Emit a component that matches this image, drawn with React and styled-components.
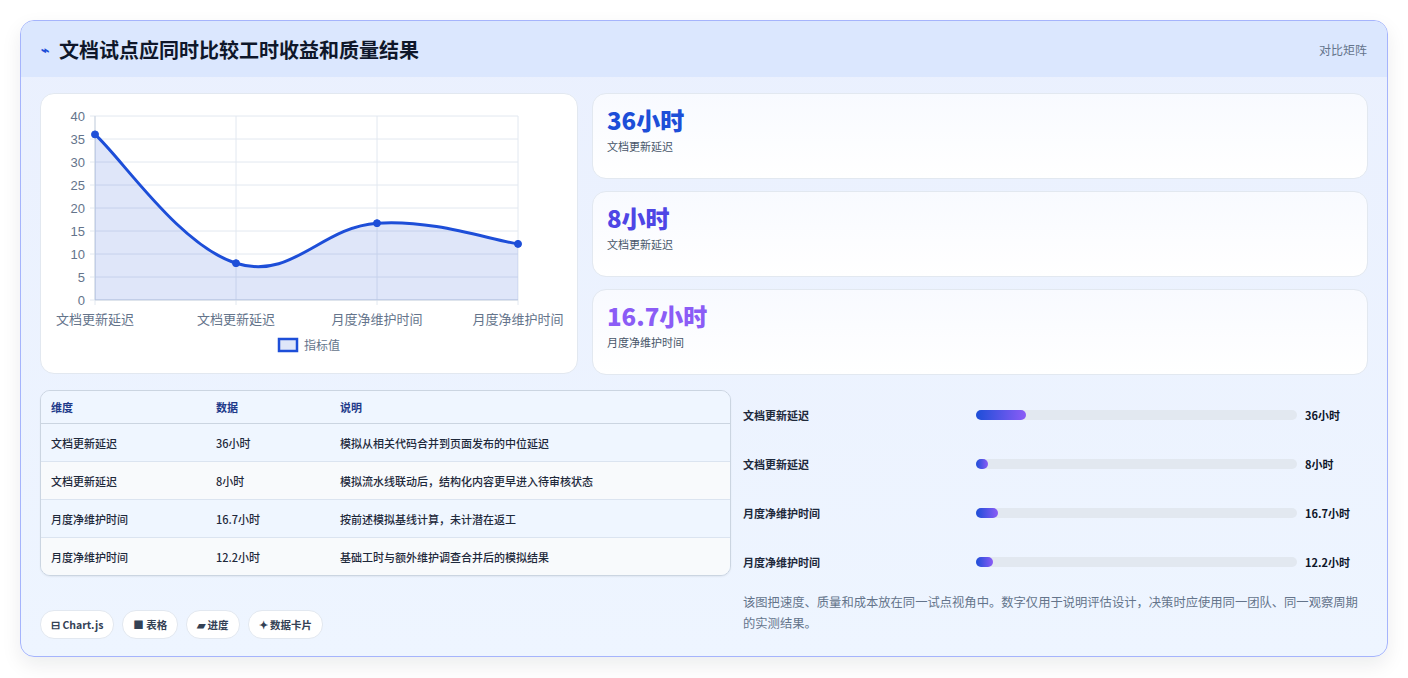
import React from "react";
import styled, { createGlobalStyle } from "styled-components";

const GlobalStyle = createGlobalStyle`
  body {
    margin: 0;
    background: #ffffff;
    font-family: "Noto Sans CJK SC", "Noto Sans", sans-serif;
  }
`;

const values = [36, 8, 16.7, 12.2];
const labels = ["文档更新延迟", "文档更新延迟", "月度净维护时间", "月度净维护时间"];

const stats = [
  { value: "36小时", label: "文档更新延迟", color: "#1d4ed8" },
  { value: "8小时", label: "文档更新延迟", color: "#4f46e5" },
  { value: "16.7小时", label: "月度净维护时间", color: "#8b5cf6" },
];

const rows = [
  ["文档更新延迟", "36小时", "模拟从相关代码合并到页面发布的中位延迟"],
  ["文档更新延迟", "8小时", "模拟流水线联动后，结构化内容更早进入待审核状态"],
  ["月度净维护时间", "16.7小时", "按前述模拟基线计算，未计潜在返工"],
  ["月度净维护时间", "12.2小时", "基础工时与额外维护调查合并后的模拟结果"],
];

const bars = [
  { label: "文档更新延迟", value: "36小时", width: 50 },
  { label: "文档更新延迟", value: "8小时", width: 12 },
  { label: "月度净维护时间", value: "16.7小时", width: 22 },
  { label: "月度净维护时间", value: "12.2小时", width: 17 },
];

function LineChart() {
  const x0 = 54, x1 = 477, yTop = 22, yBot = 206;
  const sx = (i) => x0 + ((x1 - x0) / 3) * i;
  const sy = (v) => yBot - ((yBot - yTop) * v) / 40;
  const pts = values.map((v, i) => [sx(i), sy(v)]);
  const t = 0.4;
  let d = `M${pts[0][0]},${pts[0][1]}`;
  for (let i = 0; i < pts.length - 1; i++) {
    const p0 = pts[i - 1] || pts[i];
    const p1 = pts[i];
    const p2 = pts[i + 1];
    const p3 = pts[i + 2] || p2;
    const c1 = [p1[0] + ((p2[0] - p0[0]) * t) / 2, p1[1] + ((p2[1] - p0[1]) * t) / 2];
    const c2 = [p2[0] - ((p3[0] - p1[0]) * t) / 2, p2[1] - ((p3[1] - p1[1]) * t) / 2];
    d += ` C${c1[0]},${c1[1]} ${c2[0]},${c2[1]} ${p2[0]},${p2[1]}`;
  }
  const area = `${d} L${x1},${yBot} L${x0},${yBot} Z`;
  const ticks = [0, 5, 10, 15, 20, 25, 30, 35, 40];
  return (
    <svg width="538" height="281" viewBox="0 0 538 281">
      {ticks.map((v) => (
        <g key={v}>
          <line x1={x0 - 5} x2={x1} y1={sy(v)} y2={sy(v)} stroke="#e2e8f0" />
          <text x={x0 - 10} y={sy(v) + 4.5} textAnchor="end" fontSize="13" fill="#64748b" fontFamily="Liberation Sans, sans-serif">{v}</text>
        </g>
      ))}
      {labels.map((l, i) => (
        <g key={i}>
          <line x1={sx(i)} x2={sx(i)} y1={yTop} y2={yBot + 5} stroke="#e2e8f0" />
          <text x={sx(i)} y={yBot + 24} textAnchor="middle" fontSize="13" fill="#64748b">{l}</text>
        </g>
      ))}
      <line x1={x0} x2={x0} y1={yTop} y2={yBot} stroke="#cbd5e1" />
      <line x1={x0} x2={x1} y1={yBot} y2={yBot} stroke="#cbd5e1" />
      <path d={area} fill="rgba(29,78,216,0.14)" />
      <path d={d} fill="none" stroke="#1d4ed8" strokeWidth="3" />
      {pts.map((p, i) => (
        <circle key={i} cx={p[0]} cy={p[1]} r="3.5" fill="#1d4ed8" stroke="#1d4ed8" />
      ))}
      <rect x="238" y="245" width="18" height="12" fill="rgba(29,78,216,0.14)" stroke="#1d4ed8" strokeWidth="2.5" />
      <text x="263" y="256" fontSize="12" fill="#64748b">指标值</text>
    </svg>
  );
}

export default function App() {
  return (
    <>
      <GlobalStyle />
      <Page>
        <Panel>
          <Header>
            <Title>
              <Spark>⌁</Spark>
              文档试点应同时比较工时收益和质量结果
            </Title>
            <Tag>对比矩阵</Tag>
          </Header>
          <Body>
            <TopRow>
              <ChartCard>
                <LineChart />
              </ChartCard>
              <Stats>
                {stats.map((s, i) => (
                  <StatCard key={i}>
                    <StatValue $color={s.color}>{s.value}</StatValue>
                    <StatLabel>{s.label}</StatLabel>
                  </StatCard>
                ))}
              </Stats>
            </TopRow>
            <BottomRow>
              <LeftCol>
                <Table>
                  <thead>
                    <tr>
                      <Th>维度</Th>
                      <Th>数据</Th>
                      <Th>说明</Th>
                    </tr>
                  </thead>
                  <tbody>
                    {rows.map((r, i) => (
                      <Tr key={i} $alt={i % 2 === 1}>
                        {r.map((c, j) => (
                          <Td key={j}>{c}</Td>
                        ))}
                      </Tr>
                    ))}
                  </tbody>
                </Table>
                <Chips>
                  <Chip>⊟ Chart.js</Chip>
                  <Chip>■ 表格</Chip>
                  <Chip>▰ 进度</Chip>
                  <Chip>✦ 数据卡片</Chip>
                </Chips>
              </LeftCol>
              <RightCol>
                {bars.map((b, i) => (
                  <BarRow key={i}>
                    <BarLabel>{b.label}</BarLabel>
                    <Track>
                      <Fill style={{ width: b.width }} />
                    </Track>
                    <BarValue>{b.value}</BarValue>
                  </BarRow>
                ))}
                <Note>
                  该图把速度、质量和成本放在同一试点视角中。数字仅用于说明评估设计，决策时应使用同一团队、同一观察周期的实测结果。
                </Note>
              </RightCol>
            </BottomRow>
          </Body>
        </Panel>
      </Page>
    </>
  );
}

const Page = styled.div`
  padding: 20px 20px 21px 20px;
`;

const Panel = styled.div`
  width: 1368px;
  height: 637px;
  box-sizing: border-box;
  border: 1px solid #a5b4fc;
  border-radius: 14px;
  background: linear-gradient(180deg, #eaf0fe 0%, #eef5ff 100%);
  box-shadow: 0 8px 20px rgba(15, 23, 42, 0.08);
  overflow: hidden;
`;

const Header = styled.div`
  height: 56px;
  display: flex;
  align-items: center;
  justify-content: space-between;
  padding: 0 20px 0 20px;
  background: #dbe7fe;
`;

const Title = styled.h1`
  margin: 0;
  font-size: 20px;
  font-weight: 700;
  color: #0f172a;
  display: flex;
  align-items: center;
  gap: 10px;
`;

const Spark = styled.span`
  color: #1d4ed8;
  font-size: 14px;
`;

const Tag = styled.span`
  font-size: 12px;
  color: #64748b;
`;

const Body = styled.div`
  padding: 16px 19px 0 19px;
`;

const TopRow = styled.div`
  display: grid;
  grid-template-columns: 538px 1fr;
  gap: 14px;
`;

const ChartCard = styled.div`
  height: 281px;
  background: #ffffff;
  border: 1px solid #e2e8f0;
  border-radius: 14px;
  box-sizing: border-box;
  overflow: hidden;
`;

const Stats = styled.div`
  display: flex;
  flex-direction: column;
  gap: 12px;
`;

const StatCard = styled.div`
  height: 86px;
  box-sizing: border-box;
  padding: 10px 14px;
  background: linear-gradient(180deg, #f8faff, #ffffff);
  border: 1px solid #e2e8f0;
  border-radius: 14px;
`;

const StatValue = styled.div`
  font-size: 24px;
  font-weight: 800;
  line-height: 32px;
  color: ${(p) => p.$color};
`;

const StatLabel = styled.div`
  font-size: 11px;
  color: #475569;
  margin-top: 2px;
`;

const BottomRow = styled.div`
  display: grid;
  grid-template-columns: 691px 1fr;
  gap: 12px;
  margin-top: 15px;
`;

const LeftCol = styled.div`
  display: flex;
  flex-direction: column;
`;

const Table = styled.table`
  width: 100%;
  border-collapse: separate;
  border-spacing: 0;
  border: 1px solid #cbd5e1;
  border-radius: 10px;
  overflow: hidden;
  font-size: 11px;
  box-shadow: 0 1px 2px rgba(15, 23, 42, 0.06);
`;

const Th = styled.th`
  text-align: left;
  font-weight: 700;
  color: #1e3a8a;
  padding: 0 10px;
  height: 32px;
  background: #eff6ff;
  border-bottom: 1px solid #cbd5e1;
  &:nth-child(1) { width: 145px; }
  &:nth-child(2) { width: 104px; }
`;

const Tr = styled.tr`
  background: ${(p) => (p.$alt ? "#f8fafc" : "#eff6ff")};
  &:not(:last-child) td {
    border-bottom: 1px solid #dbe4f0;
  }
`;

const Td = styled.td`
  padding: 0 10px;
  height: 37px;
  color: #1e293b;
  font-weight: 500;
`;

const Chips = styled.div`
  display: flex;
  gap: 8px;
  margin-top: 34px;
`;

const Chip = styled.span`
  padding: 6px 10px;
  border-radius: 14px;
  background: #ffffff;
  border: 1px solid #e2e8f0;
  font-size: 10.5px;
  font-weight: 700;
  color: #334155;
`;

const RightCol = styled.div`
  display: flex;
  flex-direction: column;
  padding-right: 0;
`;

const BarRow = styled.div`
  display: grid;
  grid-template-columns: 225px 321px 1fr;
  align-items: center;
  gap: 8px;
  height: 49px;
`;

const BarLabel = styled.span`
  font-size: 11px;
  font-weight: 700;
  color: #1e293b;
`;

const Track = styled.div`
  height: 10px;
  border-radius: 5px;
  background: #e2e8f0;
`;

const Fill = styled.div`
  height: 100%;
  border-radius: 5px;
  background: linear-gradient(90deg, #1d4ed8, #8b5cf6);
`;

const BarValue = styled.span`
  font-size: 11px;
  font-weight: 700;
  color: #0f172a;
`;

const Note = styled.p`
  margin: 6px 0 0 0;
  font-size: 12.3px;
  line-height: 21px;
  color: #64748b;
`;
